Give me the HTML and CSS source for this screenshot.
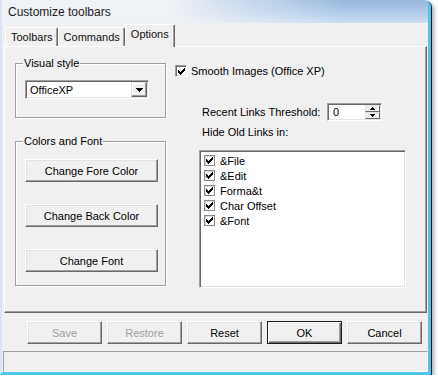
FILE: index.html
```html
<!DOCTYPE html>
<html lang="en">
<head>
  <meta charset="utf-8">
  <title>Customize toolbars</title>
  <link rel="stylesheet" href="styles.css">
</head>
<body>

  <div class="window">
    <div class="titlebar">Customize toolbars</div>

    <div class="client">
      <div class="tabs">
        <div class="tab">Toolbars</div>
        <div class="tab">Commands</div>
        <div class="tab tab-active">Options</div>
      </div>

      <div class="panel">
        <div class="col-left">
          <div class="group group-style">
            <span class="group-label">Visual style</span>
            <div class="combo">
              <span class="combo-text">OfficeXP</span>
              <span class="combo-btn">
                <svg width="7" height="4" viewBox="0 0 7 4" shape-rendering="crispEdges"><path d="M0 0h7v1H0z M1 1h5v1H1z M2 2h3v1H2z M3 3h1v1H3z" fill="#000"/></svg>
              </span>
            </div>
          </div>

          <div class="group group-colors">
            <span class="group-label">Colors and Font</span>
            <button class="btn btn-wide">Change Fore Color</button>
            <button class="btn btn-wide">Change Back Color</button>
            <button class="btn btn-wide">Change Font</button>
          </div>
        </div>

        <div class="col-right">
          <div class="check-row">
            <span class="check check-big">
              <svg width="7" height="7" viewBox="0 0 7 7" shape-rendering="crispEdges"><path d="M0 2h1v3H0z M1 3h1v3H1z M2 4h1v3H2z M3 3h1v3H3z M4 2h1v3H4z M5 1h1v3H5z M6 0h1v3H6z" fill="#000"/></svg>
            </span>
            Smooth Images (Office XP)
          </div>

          <div class="threshold-row">
            <span class="threshold-label">Recent Links Threshold:</span>
            <div class="spin">
              <span class="spin-text">0</span>
              <span class="spin-btns">
                <span class="spin-btn">
                  <svg width="5" height="3" viewBox="0 0 5 3" shape-rendering="crispEdges"><path d="M2 0h1v1H2z M1 1h3v1H1z M0 2h5v1H0z" fill="#000"/></svg>
                </span>
                <span class="spin-btn">
                  <svg width="5" height="3" viewBox="0 0 5 3" shape-rendering="crispEdges"><path d="M0 0h5v1H0z M1 1h3v1H1z M2 2h1v1H2z" fill="#000"/></svg>
                </span>
              </span>
            </div>
          </div>

          <div class="hide-label">Hide Old Links in:</div>

          <div class="listbox">
            <div class="list-item">
              <span class="check"><svg width="7" height="7" viewBox="0 0 7 7" shape-rendering="crispEdges"><path d="M0 2h1v3H0z M1 3h1v3H1z M2 4h1v3H2z M3 3h1v3H3z M4 2h1v3H4z M5 1h1v3H5z M6 0h1v3H6z" fill="#000"/></svg></span>
              &amp;File
            </div>
            <div class="list-item">
              <span class="check"><svg width="7" height="7" viewBox="0 0 7 7" shape-rendering="crispEdges"><path d="M0 2h1v3H0z M1 3h1v3H1z M2 4h1v3H2z M3 3h1v3H3z M4 2h1v3H4z M5 1h1v3H5z M6 0h1v3H6z" fill="#000"/></svg></span>
              &amp;Edit
            </div>
            <div class="list-item">
              <span class="check"><svg width="7" height="7" viewBox="0 0 7 7" shape-rendering="crispEdges"><path d="M0 2h1v3H0z M1 3h1v3H1z M2 4h1v3H2z M3 3h1v3H3z M4 2h1v3H4z M5 1h1v3H5z M6 0h1v3H6z" fill="#000"/></svg></span>
              Forma&amp;t
            </div>
            <div class="list-item">
              <span class="check"><svg width="7" height="7" viewBox="0 0 7 7" shape-rendering="crispEdges"><path d="M0 2h1v3H0z M1 3h1v3H1z M2 4h1v3H2z M3 3h1v3H3z M4 2h1v3H4z M5 1h1v3H5z M6 0h1v3H6z" fill="#000"/></svg></span>
              Char Offset
            </div>
            <div class="list-item">
              <span class="check"><svg width="7" height="7" viewBox="0 0 7 7" shape-rendering="crispEdges"><path d="M0 2h1v3H0z M1 3h1v3H1z M2 4h1v3H2z M3 3h1v3H3z M4 2h1v3H4z M5 1h1v3H5z M6 0h1v3H6z" fill="#000"/></svg></span>
              &amp;Font
            </div>
          </div>
        </div>
      </div>

      <div class="buttons">
        <button class="btn btn-small" disabled>Save</button>
        <button class="btn btn-small" disabled>Restore</button>
        <button class="btn btn-small">Reset</button>
        <button class="btn btn-small btn-default">OK</button>
        <button class="btn btn-small">Cancel</button>
      </div>

      <div class="statusbar"></div>
    </div>
  </div>

</body>
</html>
```

FILE: styles.css
```css
* {
  box-sizing: border-box;
}

body {
  margin: 0;
  background: #fff;
  font-family: "Liberation Sans", Arial, sans-serif;
  font-size: 11px;
  color: #000;
}

.window {
  width: 431px;
  height: 375px;
  border-left: 2px solid #d6e4f3;
  border-right: 3px solid #4fc2ee;
  border-bottom: 3px solid #4fc2ee;
  border-top-right-radius: 6px;
  background: #f0f0f0;
  box-shadow: 1px 1px 0 #1c1c1c, 3px 3px 4px rgba(0,0,0,0.35);
  display: flex;
  flex-direction: column;
}

.titlebar {
  height: 23px;
  padding-left: 6px;
  line-height: 24px;
  font-size: 12px;
  color: #1e1e1e;
  background:
    linear-gradient(to right, #eef1f5 0%, #eef1f5 40%, rgba(238,241,245,0) 80%),
    linear-gradient(to bottom, #98b8df 0%, #b0cae9 55%, #cfe0f3 100%);
  border-top-right-radius: 5px;
}

.client {
  flex: 1;
  display: flex;
  flex-direction: column;
  padding-top: 1px;
}

/* tabs */

.tabs {
  height: 22px;
  margin-left: 3px;
  display: flex;
  align-items: flex-end;
  position: relative;
  z-index: 1;
}

.tab {
  height: 19px;
  padding: 0 4px 0 5px;
  line-height: 18px;
  border: 1px solid;
  border-color: #fff #696969 transparent #fff;
  border-bottom: none;
  border-radius: 2px 2px 0 0;
  box-shadow: inset -1px 0 0 #a0a0a0;
  background: #f0f0f0;
  color: #111;
}

.tab-active {
  height: 23px;
  padding: 0 5px 3px;
  line-height: 19px;
  margin-bottom: -1px;
}

/* options page */

.panel {
  height: 267px;
  margin: 0 1px 0 2px;
  border: 1px solid;
  border-color: #fff #696969 #696969 #fff;
  box-shadow: inset -1px -1px 0 #a0a0a0;
  padding: 16px 0 0 10px;
  display: flex;
  gap: 9px;
}

.col-left {
  width: 151px;
  display: flex;
  flex-direction: column;
}

.group {
  position: relative;
  border: 1px solid #a0a0a0;
  box-shadow: inset 1px 1px 0 #fff, 1px 1px 0 #fff;
}

.group-label {
  position: absolute;
  top: -7px;
  left: 7px;
  padding: 0 1px;
  line-height: 13px;
  background: #f0f0f0;
}

.group-style {
  height: 55px;
  padding: 16px 0 0 9px;
}

.group-colors {
  height: 145px;
  margin-top: 23px;
  padding: 17px 0 0 9px;
  display: flex;
  flex-direction: column;
  gap: 22px;
}

.combo {
  width: 124px;
  height: 19px;
  display: flex;
  align-items: center;
  justify-content: space-between;
  border: 1px solid;
  border-color: #a0a0a0 #fff #fff #a0a0a0;
  box-shadow: inset 1px 1px 0 #696969, inset -1px -1px 0 #e3e3e3;
  background: #fff;
  padding: 1px;
}

.combo-text {
  padding-left: 3px;
}

.combo-btn {
  width: 16px;
  height: 15px;
  display: flex;
  align-items: center;
  justify-content: center;
  background: #f0f0f0;
  border: 1px solid;
  border-color: #e3e3e3 #696969 #696969 #e3e3e3;
  box-shadow: inset -1px -1px 0 #a0a0a0, inset 1px 1px 0 #fff;
}

.btn {
  font-family: "Liberation Sans", Arial, sans-serif;
  font-size: 11px;
  color: #000;
  background: #f0f0f0;
  border: 1px solid;
  border-color: #fff #696969 #696969 #fff;
  box-shadow: inset -1px -1px 0 #a0a0a0, inset 1px 1px 0 #e3e3e3;
  padding: 0;
  margin: 0;
}

.btn:disabled {
  color: #a0a0a0;
}

.btn-wide {
  width: 133px;
  height: 23px;
}

.btn-small {
  width: 75px;
  height: 23px;
}

.btn-default {
  border: 1px solid #1e1e1e;
  box-shadow: inset 1px 1px 0 #fff, inset -1px -1px 0 #696969, inset -2px -2px 0 #a0a0a0;
}

.col-right {
  padding-top: 2px;
  display: flex;
  flex-direction: column;
}

.check-row {
  height: 12px;
  display: flex;
  align-items: center;
  gap: 4px;
  line-height: 13px;
}

.check {
  width: 11px;
  height: 11px;
  display: flex;
  align-items: center;
  justify-content: center;
  background: #fff;
  border: 1px solid #8a8a8a;
  box-shadow: inset 1px 1px 0 #dcdcdc;
}

.check-big {
  width: 12px;
  height: 12px;
  border-color: #a0a0a0 #fff #fff #a0a0a0;
  box-shadow: inset 1px 1px 0 #696969, inset -1px -1px 0 #e3e3e3;
}

.threshold-row {
  height: 18px;
  margin-top: 26px;
  padding-left: 27px;
  display: flex;
  align-items: center;
}

.threshold-label {
  width: 125px;
}

.spin {
  width: 55px;
  height: 18px;
  display: flex;
  justify-content: space-between;
  border: 1px solid;
  border-color: #a0a0a0 #fff #fff #a0a0a0;
  box-shadow: inset 1px 1px 0 #696969, inset -1px -1px 0 #e3e3e3;
  background: #fff;
  padding: 1px;
}

.spin-text {
  padding-left: 4px;
  line-height: 14px;
}

.spin-btns {
  width: 15px;
  display: flex;
  flex-direction: column;
}

.spin-btn {
  flex: 1;
  display: flex;
  align-items: center;
  justify-content: center;
  background: #f0f0f0;
  border: 1px solid;
  border-color: #e3e3e3 #696969 #696969 #e3e3e3;
}

.hide-label {
  margin-top: 5px;
  padding-left: 27px;
  line-height: 13px;
}

.listbox {
  width: 207px;
  height: 138px;
  margin: 11px 0 0 24px;
  border: 1px solid;
  border-color: #a0a0a0 #fff #fff #a0a0a0;
  box-shadow: inset 1px 1px 0 #696969, inset -1px -1px 0 #e3e3e3;
  background: #fff;
  padding: 2px 0 0 2px;
}

.list-item {
  height: 15px;
  display: flex;
  align-items: center;
  gap: 5px;
  padding-left: 2px;
}

/* bottom */

.buttons {
  margin-top: 8px;
  padding-left: 25px;
  display: flex;
  gap: 5px;
}

.statusbar {
  width: 425px;
  height: 21px;
  margin: 7px 0 0 1px;
  border: 1px solid;
  border-color: #a0a0a0 #fff #fff #a0a0a0;
}
```
